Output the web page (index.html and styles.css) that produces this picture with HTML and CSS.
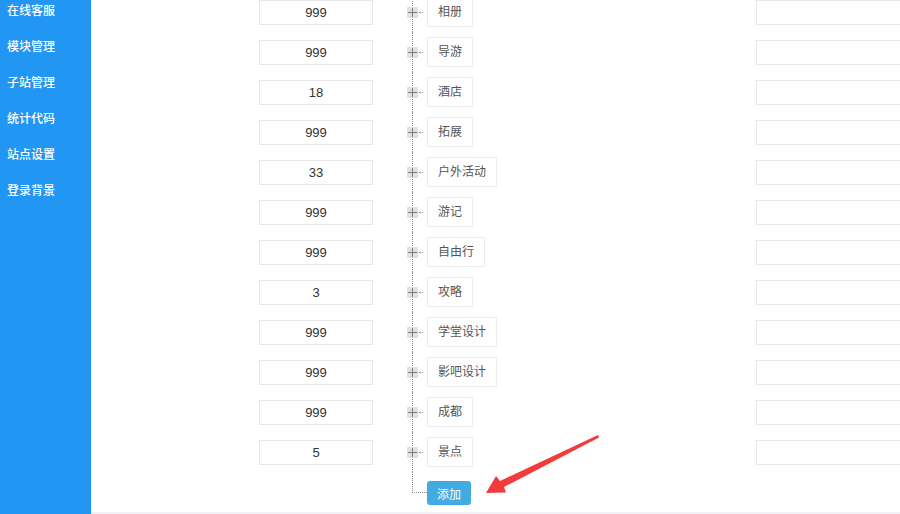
FILE: index.html
```html
<!DOCTYPE html>
<html lang="zh-CN">
  <head>
    <meta charset="UTF-8" />
    <meta name="viewport" content="width=device-width, initial-scale=1.0" />
    <title>栏目管理</title>
    <link rel="stylesheet" href="styles.css">
  </head>
  <body>
    <div class="page">
      <div class="sidebar">
        <ul class="menu">
          <li>在线客服</li>
          <li>模块管理</li>
          <li>子站管理</li>
          <li>统计代码</li>
          <li>站点设置</li>
          <li>登录背景</li>
        </ul>
      </div>

      <div class="main">
        <div class="rows" id="rows"></div>
        <div class="footer-line"></div>
      </div>
    </div>

    <svg class="arrow" width="900" height="514" viewBox="0 0 900 514">
      <polygon points="598,435 599,437.5 504,487 506,492.5 486,493 496,476 500,481" fill="#f23b3b" />
    </svg>

    <script>
      var items = [
        { sort: "999", name: "相册" },
        { sort: "999", name: "导游" },
        { sort: "18", name: "酒店" },
        { sort: "999", name: "拓展" },
        { sort: "33", name: "户外活动" },
        { sort: "999", name: "游记" },
        { sort: "999", name: "自由行" },
        { sort: "3", name: "攻略" },
        { sort: "999", name: "学堂设计" },
        { sort: "999", name: "影吧设计" },
        { sort: "999", name: "成都" },
        { sort: "5", name: "景点" }
      ];

      var plusIcon =
        '<svg width="11" height="11" viewBox="0 0 11 11">' +
        '<rect width="11" height="11" fill="#e1e1e1" />' +
        '<path d="M1 5.5h9M5.5 1v9" stroke="#7a7a7a" stroke-width="1" />' +
        "</svg>";

      function renderRows() {
        var html = "";
        items.forEach(function (item) {
          html +=
            '<div class="row">' +
            '<input class="sort" type="text" value="' + item.sort + '" />' +
            '<div class="tree">' +
            '<span class="plus">' + plusIcon + "</span>" +
            '<span class="branch"></span>' +
            '<span class="label">' + item.name + "</span>" +
            "</div>" +
            '<input class="extra" type="text" />' +
            "</div>";
        });
        html +=
          '<div class="row">' +
          '<div class="sort-spacer"></div>' +
          '<div class="tree tree-end">' +
          '<span class="elbow"></span>' +
          '<button class="btn-add">添加</button>' +
          "</div>" +
          "</div>";
        document.getElementById("rows").innerHTML = html;
      }

      renderRows();
    </script>
  </body>
</html>
```

FILE: styles.css
```css
body {
  margin: 0;
  font-family: "Liberation Sans", "Noto Sans CJK SC", sans-serif;
  font-size: 13px;
  background-color: #fff;
  overflow: hidden;
}
.page {
  display: flex;
  height: 514px;
  overflow: hidden;
}
.sidebar {
  width: 91px;
  flex-shrink: 0;
  background-color: #2196f3;
}
.menu {
  list-style: none;
  margin: -7px 0 0 0;
  padding: 0;
}
.menu li {
  height: 36px;
  line-height: 36px;
  padding-left: 7px;
  color: #fff;
  font-size: 12px;
  font-weight: 500;
}
.main {
  flex: 1;
  display: flex;
  flex-direction: column;
  min-width: 0;
}
.rows {
  margin-top: -8px;
  height: 520px;
  flex-shrink: 0;
}
.row {
  display: flex;
  align-items: center;
  height: 40px;
}
.sort,
.sort-spacer {
  width: 114px;
  height: 25px;
  margin-left: 168px;
  flex-shrink: 0;
  box-sizing: border-box;
}
.sort {
  border: 1px solid #e8e8e8;
  padding: 0;
  text-align: center;
  font-family: "Liberation Sans", "Noto Sans CJK SC", sans-serif;
  font-size: 13px;
  color: #333;
  outline: none;
}
.tree {
  display: flex;
  align-items: center;
  align-self: stretch;
  width: 343px;
  margin-left: 39px;
  border-left: 1px dotted #8a8a8a;
  flex-shrink: 0;
}
.plus {
  display: flex;
  margin-left: -6px;
}
.branch {
  width: 4px;
  margin-left: 1px;
  border-top: 1px dotted #8a8a8a;
}
.label {
  margin-left: 4px;
  height: 30px;
  line-height: 28px;
  padding: 0 10px;
  box-sizing: border-box;
  border: 1px solid #ebebeb;
  color: #555;
  font-size: 12px;
  white-space: nowrap;
}
.extra {
  width: 300px;
  height: 25px;
  flex-shrink: 0;
  box-sizing: border-box;
  border: 1px solid #e8e8e8;
  outline: none;
}
.tree-end {
  align-items: flex-start;
  border-left: none;
}
.elbow {
  width: 14px;
  height: 20px;
  border-left: 1px dotted #8a8a8a;
  border-bottom: 1px dotted #8a8a8a;
  flex-shrink: 0;
}
.btn-add {
  margin-top: 9px;
  height: 24px;
  padding: 0 10px;
  border: none;
  border-radius: 3px;
  background-color: #42abe2;
  color: #fff;
  font-family: "Liberation Sans", "Noto Sans CJK SC", sans-serif;
  font-size: 12px;
  cursor: pointer;
}
.footer-line {
  height: 10px;
  background-color: #f2f2f6;
}
.arrow {
  position: absolute;
  left: 0;
  top: 0;
  pointer-events: none;
}
```
